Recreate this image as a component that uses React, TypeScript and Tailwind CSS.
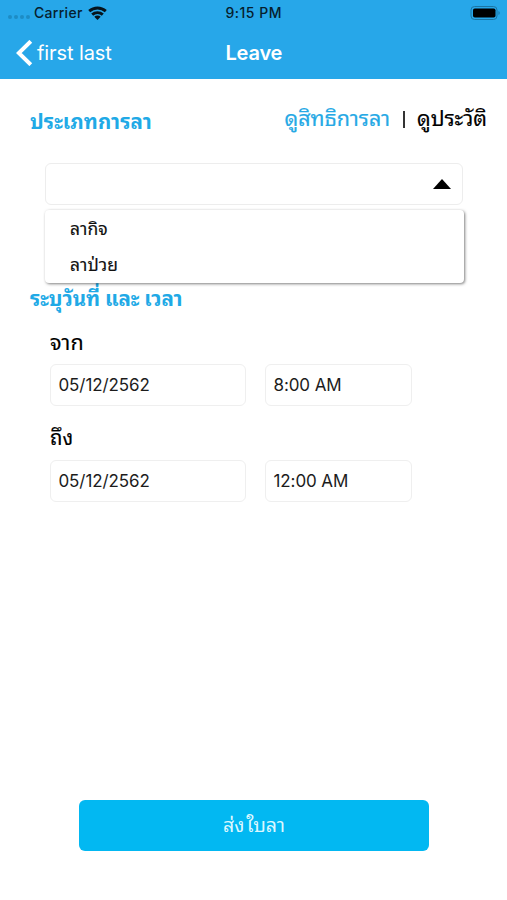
import React from "react";

const ui = "font-['Inter','Noto_Sans_Thai_Looped','Loma','Waree','Garuda','Noto_Sans',sans-serif]";

function Field({ value, width }: { value: string; width: string }) {
  return (
    <div
      className={`flex h-[42px] items-center rounded-md border border-[#efefef] pl-[7.500px] text-[17px] leading-none tracking-[-0.1px] text-[#1c1c1c] ${width}`}
    >
      <span className="whitespace-nowrap">{value}</span>
    </div>
  );
}

function StatusBar() {
  return (
    <div className="flex h-[26px] items-center justify-between pl-2 pr-[6px] text-[14px] font-medium leading-none text-[#06202e]">
      <div className="flex w-[217px] items-center">
        <div className="mt-[8px] flex gap-[2.500px]">
          {[0, 1, 2, 3].map((i) => (
            <i key={i} className="size-[3.500px] rounded-full bg-[#1d8cc5]" />
          ))}
        </div>
        <span className="ml-[4.500px] tracking-[0.3px]">Carrier</span>
        <svg className="ml-[5px]" width="19" height="14" viewBox="0 0 19 14" fill="none" stroke="#06141c" strokeWidth="2.9">
          <path d="M1.2 5.2C6 .9 13 .9 17.8 5.2" />
          <path d="M4.2 8.6C7.2 5.9 11.8 5.9 14.8 8.6" />
          <path d="M9.5 14L6.3 10.8C8 9.2 11 9.2 12.7 10.8Z" fill="#06141c" stroke="none" />
        </svg>
      </div>
      <span className="flex-1 pl-[0.500px] tracking-[0.5px]">9:15 PM</span>
      <svg width="31" height="14" viewBox="0 0 31 14">
        <rect x="1" y=".5" width="26" height="13" rx="3.5" fill="none" stroke="#1b75a3" />
        <rect x="3" y="2.5" width="22.5" height="9" rx="1.8" fill="#000" />
        <path d="M28.5 5v4c1.6-.6 1.6-3.4 0-4z" fill="#1b75a3" />
      </svg>
    </div>
  );
}

export default function App() {
  return (
    <div className={`flex h-[900px] w-[507px] flex-col overflow-hidden bg-white ${ui}`}>
      <header className="h-[79px] bg-[#27a7e9]">
        <StatusBar />
        <nav className="flex h-[53px] items-center pl-4 text-white">
          <svg width="17" height="26" viewBox="0 0 17 26" fill="none" stroke="white" strokeWidth="4">
            <path d="M14.8 1.3L2.8 13L14.8 24.7" />
          </svg>
          <span className="ml-[4px] w-[188.500px] whitespace-nowrap text-[20px] tracking-[-0.1px]">first last</span>
          <span className="text-[20px] font-semibold tracking-[-0.2px]">Leave</span>
        </nav>
      </header>

      <main className="flex flex-1 flex-col">
        <div className="flex h-[84px] justify-between pl-[30px] pr-[20px] pt-[23px] leading-[32px]">
          <h2 className="mt-[4px] text-[20.500px] font-bold tracking-[0.1px] text-[#20a9e6]">ประเภทการลา</h2>
          <div className="flex text-[21.500px]">
            <span className="text-[#27a9e5] [-webkit-text-stroke:0.2px_#27a9e5]">ดูสิทธิการลา</span>
            <i className="ml-[13px] mr-[12px] mt-[9px] h-[17px] w-[2px] bg-[#333]" />
            <span className="tracking-[-0.1px] text-black [-webkit-text-stroke:0.15px_black]">ดูประวัติ</span>
          </div>
        </div>

        <div className="relative ml-[45px] h-[42px] w-[418px] rounded-md border border-[#ededed]">
          <svg className="absolute right-[11px] top-[15px]" width="18" height="10" viewBox="0 0 18 10">
            <path d="M0 10L9 0L18 10Z" />
          </svg>
          <ul className="absolute left-[-1px] top-[46px] h-[73px] w-[419px] rounded bg-white pl-[25px] pt-px text-[17.500px] tracking-[0.1px] text-[#111] shadow-[1px_1px_3px_0px_rgba(0,0,0,0.5)] [-webkit-text-stroke:0.15px_#111]">
            <li className="flex h-[36px] items-center">ลากิจ</li>
            <li className="flex h-[37px] items-center">ลาป่วย</li>
          </ul>
        </div>

        <h2 className="mt-[78px] pl-[30px] text-[20.500px] font-bold leading-[32px] tracking-[-0.05px] text-[#20a9e6]">ระบุวันที่ และ เวลา</h2>

        <section className="pl-[50px]">
          <h3 className="mt-[11px] h-[38px] text-[21.500px] leading-[32px] text-black [-webkit-text-stroke:0.15px_black]">จาก</h3>
          <div className="flex gap-[19px]">
            <Field value="05/12/2562" width="w-[196px]" />
            <Field value="8:00 AM" width="w-[147px]" />
          </div>
          <h3 className="mt-[16px] h-[38px] text-[20.500px] leading-[32px] text-black [-webkit-text-stroke:0.15px_black]">ถึง</h3>
          <div className="flex gap-[19px]">
            <Field value="05/12/2562" width="w-[196px]" />
            <Field value="12:00 AM" width="w-[147px]" />
          </div>
        </section>

        <button className="mb-[49px] ml-[79px] mt-auto h-[51px] w-[350px] rounded-[6px] bg-[#02b8f2] text-[19.500px] text-[#dcf7ff]">
          ส่ง<span className="ml-[2px]">ใบลา</span>
        </button>
      </main>
    </div>
  );
}
